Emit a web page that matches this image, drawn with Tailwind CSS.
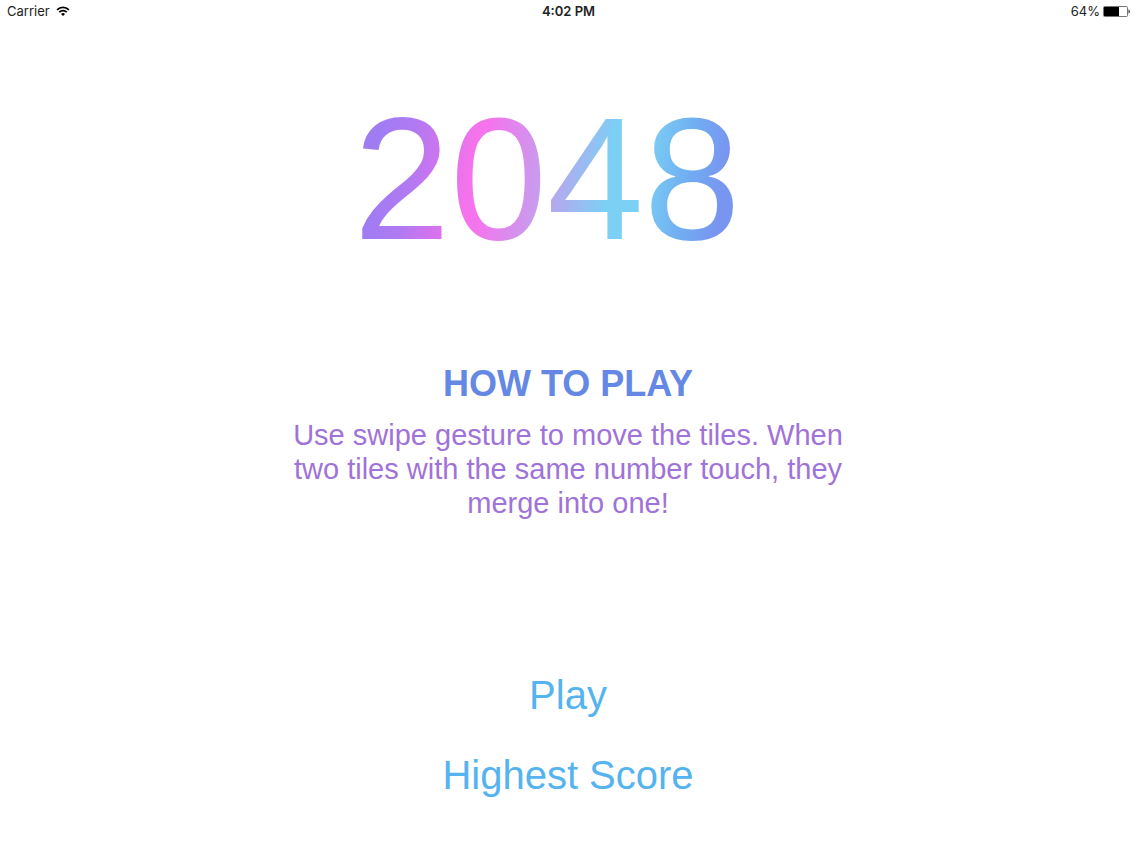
<!DOCTYPE html>
<html lang="en">
<head>
<meta charset="utf-8">
<meta name="viewport" content="width=device-width, initial-scale=1">
<title>2048</title>
<script src="https://cdn.jsdelivr.net/npm/@tailwindcss/browser@4"></script>
</head>
<body class="min-h-screen bg-white font-['Liberation_Sans',Arial,sans-serif]">
<header class="grid grid-cols-3 items-center h-[22px] pl-[7px] pr-1.5 font-[Inter,sans-serif] text-[13px] leading-4 text-[#222]">
  <div class="flex items-center gap-1.5">
    <span>Carrier</span>
    <svg class="w-[14px] h-[10px]" viewBox="0 0 15 11" fill="none" stroke="#000" stroke-width="2" aria-hidden="true">
      <path d="M1 4.2a9.4 9.4 0 0 1 13 0"/>
      <path d="M3.4 6.8a6 6 0 0 1 8.2 0"/>
      <path d="M7.5 11 5.3 8.8a3.2 3.2 0 0 1 4.4 0z" fill="#000" stroke="none"/>
    </svg>
  </div>
  <div class="text-center font-semibold">4:02 PM</div>
  <div class="flex items-center justify-end gap-[3px]">
    <span>64%</span>
    <svg class="w-[27px] h-[11px]" viewBox="0 0 27 11" aria-hidden="true">
      <rect x=".5" y=".5" width="24" height="10" rx="1" fill="none" stroke="#777"/>
      <rect x="1" y="1" width="15" height="9" fill="#000"/>
      <path d="M25.500 3.500c1.800.5 1.800 3.500 0 4z" fill="#333"/>
    </svg>
  </div>
</header>
<main class="flex flex-col items-center text-center">
  <h1 class="mt-[70px] mr-[42px] text-[174px] leading-[174px] bg-[linear-gradient(98deg,#a07cf3_8%,#b07af2_16%,#d373ee_24%,#f573ec_31%,#f573ec_34%,#c99bee_48%,#7bd0f4_65%,#7bd0f4_73%,#70aef2_84%,#7895f0_93%)] bg-clip-text text-transparent">2048</h1>
  <section class="mt-24 w-[568px] max-w-full">
    <h2 class="text-4xl leading-[44px] font-bold text-[#6488e4]">HOW TO PLAY</h2>
    <p class="mt-3 text-[29px] leading-[34px] text-[#9f73d8]">Use swipe gesture to move the tiles. When two tiles with the same number touch, they merge into one!</p>
  </section>
  <nav class="mt-[151px] flex flex-col items-center gap-8 text-[40px] leading-[48px] text-[#55b4f0]">
    <button type="button" class="cursor-pointer">Play</button>
    <button type="button" class="cursor-pointer">Highest Score</button>
  </nav>
</main>
</body>
</html>
